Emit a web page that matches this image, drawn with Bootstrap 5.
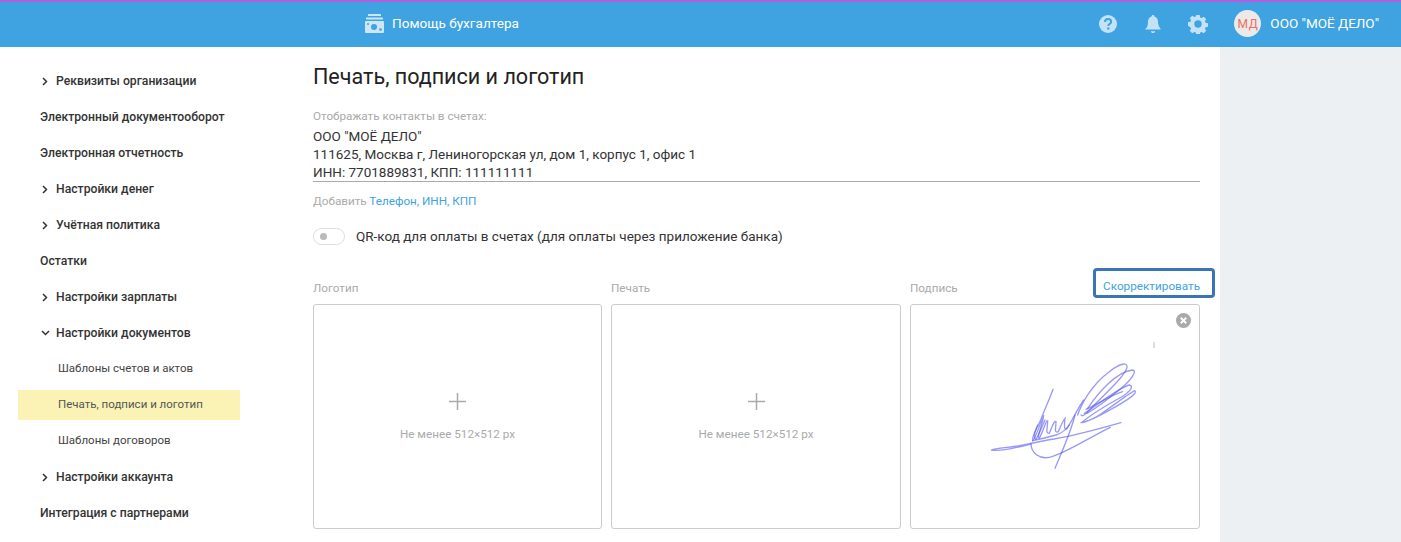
<!DOCTYPE html>
<html lang="ru">
<head>
<meta charset="utf-8">
<title>Печать, подписи и логотип</title>
<link href="https://cdn.jsdelivr.net/npm/bootstrap@5.3.0/dist/css/bootstrap.min.css" rel="stylesheet">
<style>
html,body{height:100%;overflow:hidden}
body{font-family:Roboto,"Liberation Sans",sans-serif;font-size:13.5px;color:#333;background:#fff}
.topbar{height:47px;background:#3ea3e0;border-top:2px solid #b35ede;padding:0;color:#fff;flex-wrap:nowrap}
.help-zone{margin-left:365px;gap:8px;font-size:13.57px;color:#fff;margin-top:-2px}
.tool-zone{margin-right:22px;margin-top:-2px}
.tool-ico{display:block;width:20px;height:20px;margin-right:25px}
.tool-ico.last{margin-right:26px}
.ava{width:27px;height:27px;border-radius:50%;background:#ebe9e9;color:#ee6f5f;font-size:12px;font-weight:400;letter-spacing:.6px;margin-right:9px}
.org{font-size:13.5px;color:#fff}
.shell{height:495px}
.side{width:300px;flex:none;padding:16px 60px 0 18px}
.side-link{height:36px;padding:0 0 0 22px;color:#333;font-size:12.2px;font-weight:500;display:flex;align-items:center;text-decoration:none}
.side-link.arrow{padding-left:24px}
.side-link.sub{font-size:11.5px;font-weight:400;padding-left:40px;color:#444}
.side-link.cur{height:30px;margin:3px 0;background:#faf3b5;color:#555}
.chev{width:6px;height:9px;margin-right:8px;flex:none}
.chev.open{width:9px;height:6px;margin-left:-1px;margin-right:6px}
.work{width:920px;flex:none;padding:0 20px 0 13px}
.ttl{font-size:21.55px;font-weight:400;margin:16px 0 0;line-height:27px;color:#222}
.muted-lbl{font-size:11.7px;color:#aaa}
.contacts-cap{margin-top:18px;line-height:16px}
.contacts{line-height:18px;color:#333;border-bottom:1px solid #aaa;margin-top:3px;height:55px}
.add-row{margin-top:11px;line-height:16px}
.add-row a,.fix-link{color:#3ea3e0;text-decoration:none}
.qr-row{margin-top:19px;gap:11px;height:17px}
.qr-sw{width:32px;height:17px;border:1px solid #ddd;border-radius:9px;padding-left:6px;flex:none}
.qr-dot{width:7px;height:7px;border-radius:50%;background:#bbb}
.grid-up{margin-top:23px;gap:9px}
.up-col{flex:1 1 0;min-width:0}
.up-col:first-child{flex:0 0 289px}
.up-head{height:36px;align-items:flex-end;padding-bottom:6px}
.fix-link{font-size:11.75px;line-height:16px;border:3px solid #3a75b5;border-radius:4px;width:122px;height:30px;text-align:left;padding:7px 0 0 7px;margin:0 -15px 0 0;flex:none}
.up-box{height:225px;border:1px solid #ccc;border-radius:3px;background:#fff}
.up-plus{width:17px;height:17px;margin-bottom:17px}
.up-hint{font-size:11.7px;color:#aaa;line-height:14px}
.close-ico{position:absolute;top:8px;right:8px;width:15px;height:15px}
.sign{position:absolute;left:70px;top:45px;width:160px;height:130px}
.speck{position:absolute;left:242px;top:37px;width:2px;height:6px}
.rest{flex:1 1 auto;background:#ecf0f2}
</style>
</head>
<body>
<nav class="navbar topbar">
  <div class="d-flex align-items-center help-zone">
    <svg width="19" height="19" viewBox="0 0 19 19"><rect x="3" y="0" width="13" height="2" rx=".5" fill="#cde6f7"/><rect x="1" y="3.5" width="17" height="2" rx=".5" fill="#cde6f7"/><rect x="0" y="7" width="19" height="12" rx="1" fill="#cde6f7"/><circle cx="9" cy="13" r="3" fill="#3ea3e0"/><circle cx="15.5" cy="15.5" r="1.3" fill="#3ea3e0"/><circle cx="3" cy="10" r="1" fill="#3ea3e0"/></svg>
    <span>Помощь бухгалтера</span>
  </div>
  <div class="d-flex align-items-center tool-zone">
    <svg class="tool-ico" viewBox="0 0 20 20"><circle cx="10" cy="10" r="9" fill="#c4e2f7"/><path d="M7 8c0-1.8 1.3-3 3.1-3 1.7 0 3 1.1 3 2.7 0 2.400-2.800 2.300-2.800 4.300" fill="none" stroke="#3ea3e0" stroke-width="2"/><rect x="9.200" y="13.400" width="2.200" height="2.200" fill="#3ea3e0"/></svg>
    <svg class="tool-ico" viewBox="0 0 20 20"><path d="M10 1c.9 0 1.400.6 1.400 1.400 2.500.7 3.600 2.800 3.600 5.100 0 3.500 1 5.500 2.500 7v1H2.500v-1C4 14 5 12 5 7.500c0-2.300 1.100-4.400 3.600-5.100C8.600 1.600 9.100 1 10 1z" fill="#c4e2f7"/><path d="M7.800 17.200h4.400c-.2 1.100-1.100 1.800-2.200 1.800s-2-.7-2.200-1.800z" fill="#c4e2f7"/></svg>
    <svg class="tool-ico last" viewBox="0 0 20 20"><path d="M8.300 1h3.400l.5 2.400 1.500.7 2.100-1.300 2.400 2.400-1.300 2.100.7 1.500 2.400.5v3.400l-2.400.5-.7 1.500 1.300 2.100-2.400 2.400-2.100-1.300-1.500.7-.5 2.400H8.300l-.5-2.400-1.500-.7-2.100 1.300-2.400-2.400 1.300-2.100-.7-1.500L0 11.700V8.300l2.400-.5.700-1.500-1.300-2.100 2.400-2.400 2.100 1.300 1.500-.7z" fill="#c4e2f7"/><circle cx="10" cy="10" r="3.700" fill="#3ea3e0"/></svg>
    <div class="ava d-flex align-items-center justify-content-center">МД</div>
    <span class="org">ООО "МОЁ ДЕЛО"</span>
  </div>
</nav>
<div class="d-flex shell">
  <aside class="side">
    <nav class="nav flex-column flex-nowrap">
      <a class="side-link arrow" href="#"><svg class="chev" viewBox="0 0 6 9"><path d="M1 1l3.500 3.500L1 8" fill="none" stroke="#333" stroke-width="1.500"/></svg>Реквизиты организации</a>
      <a class="side-link" href="#">Электронный документооборот</a>
      <a class="side-link" href="#">Электронная отчетность</a>
      <a class="side-link arrow" href="#"><svg class="chev" viewBox="0 0 6 9"><path d="M1 1l3.500 3.500L1 8" fill="none" stroke="#333" stroke-width="1.500"/></svg>Настройки денег</a>
      <a class="side-link arrow" href="#"><svg class="chev" viewBox="0 0 6 9"><path d="M1 1l3.500 3.500L1 8" fill="none" stroke="#333" stroke-width="1.500"/></svg>Учётная политика</a>
      <a class="side-link" href="#">Остатки</a>
      <a class="side-link arrow" href="#"><svg class="chev" viewBox="0 0 6 9"><path d="M1 1l3.500 3.500L1 8" fill="none" stroke="#333" stroke-width="1.500"/></svg>Настройки зарплаты</a>
      <a class="side-link arrow" href="#"><svg class="chev open" viewBox="0 0 9 6"><path d="M1 1l3.500 3.500L8 1" fill="none" stroke="#333" stroke-width="1.500"/></svg>Настройки документов</a>
      <a class="side-link sub" href="#">Шаблоны счетов и актов</a>
      <a class="side-link sub cur" href="#">Печать, подписи и логотип</a>
      <a class="side-link sub" href="#">Шаблоны договоров</a>
      <a class="side-link arrow" href="#"><svg class="chev" viewBox="0 0 6 9"><path d="M1 1l3.500 3.500L1 8" fill="none" stroke="#333" stroke-width="1.500"/></svg>Настройки аккаунта</a>
      <a class="side-link" href="#">Интеграция с партнерами</a>
    </nav>
  </aside>
  <main class="work">
    <h1 class="ttl">Печать, подписи и логотип</h1>
    <div class="muted-lbl contacts-cap">Отображать контакты в счетах:</div>
    <div class="contacts">ООО "МОЁ ДЕЛО"<br>111625, Москва г, Лениногорская ул, дом 1, корпус 1, офис 1<br>ИНН: 7701889831, КПП: 111111111</div>
    <div class="muted-lbl add-row">Добавить <a href="#">Телефон, ИНН, КПП</a></div>
    <div class="d-flex align-items-center qr-row">
      <div class="qr-sw d-flex align-items-center"><div class="qr-dot"></div></div>
      <span>QR-код для оплаты в счетах (для оплаты через приложение банка)</span>
    </div>
    <div class="d-flex grid-up">
      <div class="up-col">
        <div class="d-flex up-head muted-lbl">Логотип</div>
        <div class="up-box d-flex flex-column align-items-center justify-content-center">
          <svg class="up-plus" viewBox="0 0 17 17"><path d="M8.500 0v17M0 8.500h17" stroke="#aaa" stroke-width="1.500"/></svg>
          <div class="up-hint">Не менее 512×512 px</div>
        </div>
      </div>
      <div class="up-col">
        <div class="d-flex up-head muted-lbl">Печать</div>
        <div class="up-box d-flex flex-column align-items-center justify-content-center">
          <svg class="up-plus" viewBox="0 0 17 17"><path d="M8.500 0v17M0 8.500h17" stroke="#aaa" stroke-width="1.500"/></svg>
          <div class="up-hint">Не менее 512×512 px</div>
        </div>
      </div>
      <div class="up-col">
        <div class="d-flex up-head muted-lbl justify-content-between"><span>Подпись</span><a class="fix-link" href="#">Скорректировать</a></div>
        <div class="up-box position-relative">
          <svg class="close-ico" viewBox="0 0 15 15"><circle cx="7.500" cy="7.500" r="7.500" fill="#aaa"/><path d="M4.800 4.800l5.400 5.400M10.200 4.800l-5.400 5.400" stroke="#fff" stroke-width="2"/></svg>
          <svg class="sign" viewBox="0 0 480 390" fill="none" stroke="#5a5af0" stroke-width="4" stroke-linecap="round" stroke-opacity=".62">
            <path d="M216 118C205 150 192 175 180 208C170 232 150 262 155 272C165 262 180 215 188 195C186 225 165 262 175 265C190 235 195 210 200 212C200 235 192 252 205 250C215 225 220 212 225 215C225 235 218 250 232 245C240 225 248 210 252 205C250 225 248 242 258 235C275 210 290 175 308 150"/>
            <path d="M170 225C162 245 155 262 165 268C178 245 185 225 192 210"/>
            <path d="M290 195C300 165 330 105 385 65C410 45 440 32 438 52C432 75 395 110 345 160C325 180 305 205 300 195"/>
            <path d="M320 175C350 130 405 65 455 60C470 62 450 90 420 115C385 145 345 175 318 190"/>
            <path d="M310 190C350 165 410 115 445 105C462 108 445 130 405 150C370 170 335 190 305 215C295 222 325 215 355 195C400 165 450 125 462 122C470 130 440 150 395 175C360 195 320 215 300 218"/>
            <path d="M315 178C345 165 390 135 425 125"/>
            <path d="M420 218C350 238 260 262 200 270C165 278 130 284 110 288C85 292 35 296 32 300C50 305 100 295 150 282"/>
            <path d="M150 280C150 310 175 328 205 322C250 312 320 265 388 232"/>
            <path d="M282 195C270 245 245 300 222 355"/>
            <path d="M155 272C175 268 200 262 225 255C240 250 255 240 265 225"/>
          </svg>
          <svg class="speck"><path d="M1 0v6" stroke="#bbb"/></svg>
        </div>
      </div>
    </div>
  </main>
  <div class="rest"></div>
</div>
<script src="https://cdn.jsdelivr.net/npm/bootstrap@5.3.0/dist/js/bootstrap.bundle.min.js"></script>
</body>
</html>
